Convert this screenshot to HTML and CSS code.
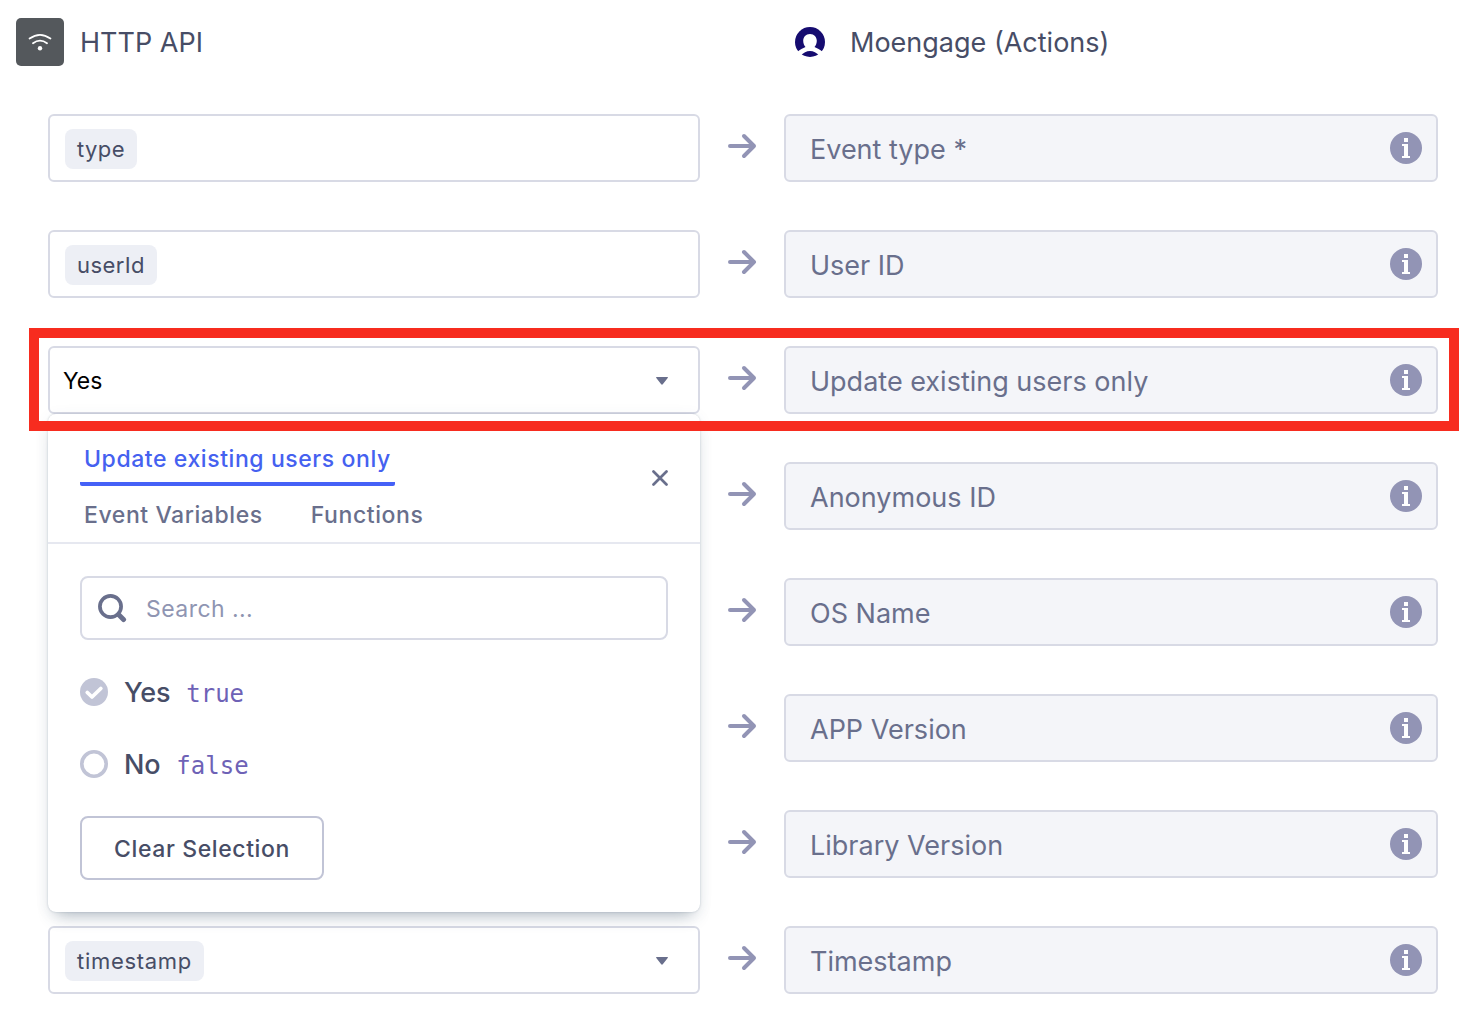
FILE: index.html
```html
<!DOCTYPE html>
<html lang="en">
<head>
<meta charset="utf-8">
<title>Field mappings</title>
<link rel="stylesheet" href="styles.css">
</head>
<body>
<svg class="defs" width="0" height="0" aria-hidden="true">
  <symbol id="arrow" viewBox="0 0 30 26"><path d="M2 13H26M16 3L26 13L16 23" fill="none" stroke="#9294b5" stroke-width="4" stroke-linecap="round" stroke-linejoin="round"/></symbol>
  <symbol id="info" viewBox="0 0 32 32"><circle cx="16" cy="16" r="16" fill="#9294b5"/><path d="M14 6h4v4h-4zM12 12h6v12h2v2h-8v-2h2v-10h-2z" fill="#fff"/></symbol>
  <symbol id="caret" viewBox="0 0 12 8"><path d="M0.5 0h11q.8 .3 .2 1L6.8 7.3q-.8 .8-1.6 0L.3 1q-.5-.7 .2-1z" fill="#696f8c"/></symbol>
</svg>
<main class="mapping">
  <header class="head">
    <div class="head-source">
      <span class="badge"><svg width="24" height="20" viewBox="0 0 24 20" fill="none" stroke="#fff" stroke-width="1.8" stroke-linecap="round"><path d="M1.600 6.600Q12-.8 22.400 6.600M5 11.200Q12 6 19 11.200"/><circle cx="12" cy="16.2" r="2.200" fill="#fff" stroke="none"/></svg></span>
      <span class="title">HTTP API</span>
    </div>
    <div class="head-target">
      <svg width="30" height="30" viewBox="0 0 30 30"><circle cx="15" cy="15" r="15" fill="#160c70"/><path d="M15 7c4.200 0 6.800 3 6.800 6.800 0 2.600-.9 4.700-2.300 6.200 2.700 1.100 5.500 2.500 8 4.800L24.500 29C21.500 25.400 18.500 24 15 24S8.500 25.400 5.500 29L2.500 24.800c2.500-2.300 5.300-3.700 8-4.800C9.100 18.500 8.200 16.400 8.200 13.800 8.200 10 10.800 7 15 7z" fill="#fff"/></svg>
      <span class="title">Moengage (Actions)</span>
    </div>
  </header>
  <div class="rows">
    <div class="row"><div class="source"><span class="chip">type</span></div><svg class="arrow"><use href="#arrow"/></svg><div class="target"><span>Event type *</span><svg class="info"><use href="#info"/></svg></div></div>
    <div class="row"><div class="source"><span class="chip">userId</span></div><svg class="arrow"><use href="#arrow"/></svg><div class="target"><span>User ID</span><svg class="info"><use href="#info"/></svg></div></div>
    <div class="row active">
      <div class="source"><span class="value">Yes</span><svg class="caret"><use href="#caret"/></svg></div><svg class="arrow"><use href="#arrow"/></svg><div class="target"><span>Update existing users only</span><svg class="info"><use href="#info"/></svg></div>
      <section class="popover">
        <div class="tabs">
          <div class="tab-list"><span class="tab selected">Update existing users only</span><span class="tab">Event Variables</span><span class="tab">Functions</span></div>
          <svg class="close" width="16" height="16" viewBox="0 0 16 16"><path d="M1.500 1.500L14.500 14.500M14.500 1.500L1.500 14.500" stroke="#696f8c" stroke-width="2.700" stroke-linecap="round"/></svg>
        </div>
        <div class="panel">
          <div class="search"><svg width="30" height="30" viewBox="0 0 30 30" fill="none" stroke="#696f8c" stroke-linecap="round"><circle cx="13.500" cy="13.500" r="10.600" stroke-width="3.700"/><path d="M21.500 21.500L26.500 26.500" stroke-width="5"/></svg><span>Search ...</span></div>
          <div class="option"><svg width="28" height="28" viewBox="0 0 28 28"><circle cx="14" cy="14" r="14" fill="#c1c4d6"/><path d="M7.300 14.500L12 19L20.800 10.500" fill="none" stroke="#fff" stroke-width="3.800" stroke-linecap="round" stroke-linejoin="round"/></svg><b>Yes</b><code>true</code></div>
          <div class="option"><svg width="28" height="28" viewBox="0 0 28 28"><circle cx="14" cy="14" r="12.200" fill="#fff" stroke="#c1c4d6" stroke-width="3.600"/></svg><b>No</b><code>false</code></div>
          <button class="clear" type="button">Clear Selection</button>
        </div>
      </section>
      <div class="highlight"></div>
    </div>
    <div class="row"><div class="source"></div><svg class="arrow"><use href="#arrow"/></svg><div class="target"><span>Anonymous ID</span><svg class="info"><use href="#info"/></svg></div></div>
    <div class="row"><div class="source"></div><svg class="arrow"><use href="#arrow"/></svg><div class="target"><span>OS Name</span><svg class="info"><use href="#info"/></svg></div></div>
    <div class="row"><div class="source"></div><svg class="arrow"><use href="#arrow"/></svg><div class="target"><span>APP Version</span><svg class="info"><use href="#info"/></svg></div></div>
    <div class="row"><div class="source"></div><svg class="arrow"><use href="#arrow"/></svg><div class="target"><span>Library Version</span><svg class="info"><use href="#info"/></svg></div></div>
    <div class="row"><div class="source"><span class="chip chip-wide">timestamp</span><svg class="caret"><use href="#caret"/></svg></div><svg class="arrow"><use href="#arrow"/></svg><div class="target"><span>Timestamp</span><svg class="info"><use href="#info"/></svg></div></div>
  </div>
</main>
</body>
</html>
```
FILE: styles.css
```css
* { box-sizing: border-box; }
body { margin: 0; background: #fff; color: #474d66; font-family: Inter, "Liberation Sans", sans-serif; }
svg { display: block; flex: none; }
.defs { position: absolute; }
.mapping { width: 1484px; height: 1014px; overflow: hidden; }
.head { display: grid; grid-template-columns: 779px 1fr; height: 114px; padding: 18px 16px 0; }
.head-source, .head-target { display: flex; align-items: center; height: 48px; }
.head-source { gap: 16px; }
.head-target { gap: 25px; }
.badge { display: flex; align-items: center; justify-content: center; width: 48px; height: 48px; border-radius: 5px; background: #54585c; }
.title { padding-top: 2px; font-size: 27px; line-height: 48px; letter-spacing: 0; white-space: nowrap; }
.rows { display: flex; flex-direction: column; gap: 48px; padding: 0 46px 0 48px; }
.row { position: relative; display: grid; grid-template-columns: 652px 30px 654px; column-gap: 27px; height: 68px; }
.source, .target { display: flex; align-items: center; justify-content: space-between; border: 2px solid #d8dae5; border-radius: 6px; }
.source { padding: 0 30px 0 15px; background: #fff; }
.target { padding: 0 14px 0 24px; background: #f4f5f9; color: #696f8c; font-size: 27px; letter-spacing: 0; }
.target span { padding-top: 2px; white-space: nowrap; }
.chip { height: 40px; margin-top: 2px; padding: 0 12px; border-radius: 8px; background: #edeff5; font-size: 22px; line-height: 40px; letter-spacing: 0.4px; }
.chip-wide { letter-spacing: 0.7px; }
.value { padding-top: 2px; color: #000; font-size: 23px; letter-spacing: 0; margin-left: -2px; }
.arrow { width: 30px; height: 26px; margin: 19px 0 0 1px; }
.info { width: 32px; height: 32px; }
.caret { width: 12px; height: 8px; margin-top: 2px; }
.active { z-index: 2; }
.popover { position: absolute; top: 68px; left: 0; width: 652px; height: 498px; border-radius: 8px; background: #fff; box-shadow: 0 0 2px rgba(67, 90, 111, 0.3), 0 10px 16px -8px rgba(67, 90, 111, 0.45), 0 2px 16px rgba(67, 90, 111, 0.06); }
.highlight { position: absolute; top: -18px; left: -19px; width: 1430px; height: 103px; border: 10px solid #f72c1f; }
.tabs { display: flex; align-items: center; justify-content: space-between; height: 130px; padding: 0 32px; border-bottom: 2px solid #e6e8f0; }
.tab-list { display: flex; flex-wrap: wrap; width: 450px; column-gap: 40px; padding-top: 16px; }
.tab { height: 56px; padding: 0 4px; color: #696f8c; font-size: 23px; font-weight: 500; line-height: 58px; letter-spacing: 0.58px; white-space: nowrap; }
.selected { color: #4561f0; margin-right: 60px; background: linear-gradient(#4561f7, #4561f7) 0 bottom / 100% 4px no-repeat; border-radius: 2px; }
.panel { display: flex; flex-direction: column; padding: 32px; }
.search { display: flex; align-items: center; gap: 19px; height: 64px; padding: 0 15px; border: 2px solid #d8dae5; border-radius: 8px; color: #8f95b2; font-size: 23px; letter-spacing: 0.45px; margin-bottom: 16px; }
.search span { padding-top: 2px; }
.option { display: flex; align-items: center; height: 72px; }
.option b { margin-left: 16px; font-size: 27px; font-weight: 500; letter-spacing: -0.2px; }
.option code { margin-left: 16px; padding-top: 3px; color: #6e62b6; font: 24px "DejaVu Sans Mono", monospace; }
.clear { width: 244px; height: 64px; margin-top: 16px; padding: 2px 0 0; border: 2px solid #c1c4d6; border-radius: 8px; background: #fff; color: #474d66; font: 500 23px Inter, "Liberation Sans", sans-serif; letter-spacing: 0.6px; }
```
